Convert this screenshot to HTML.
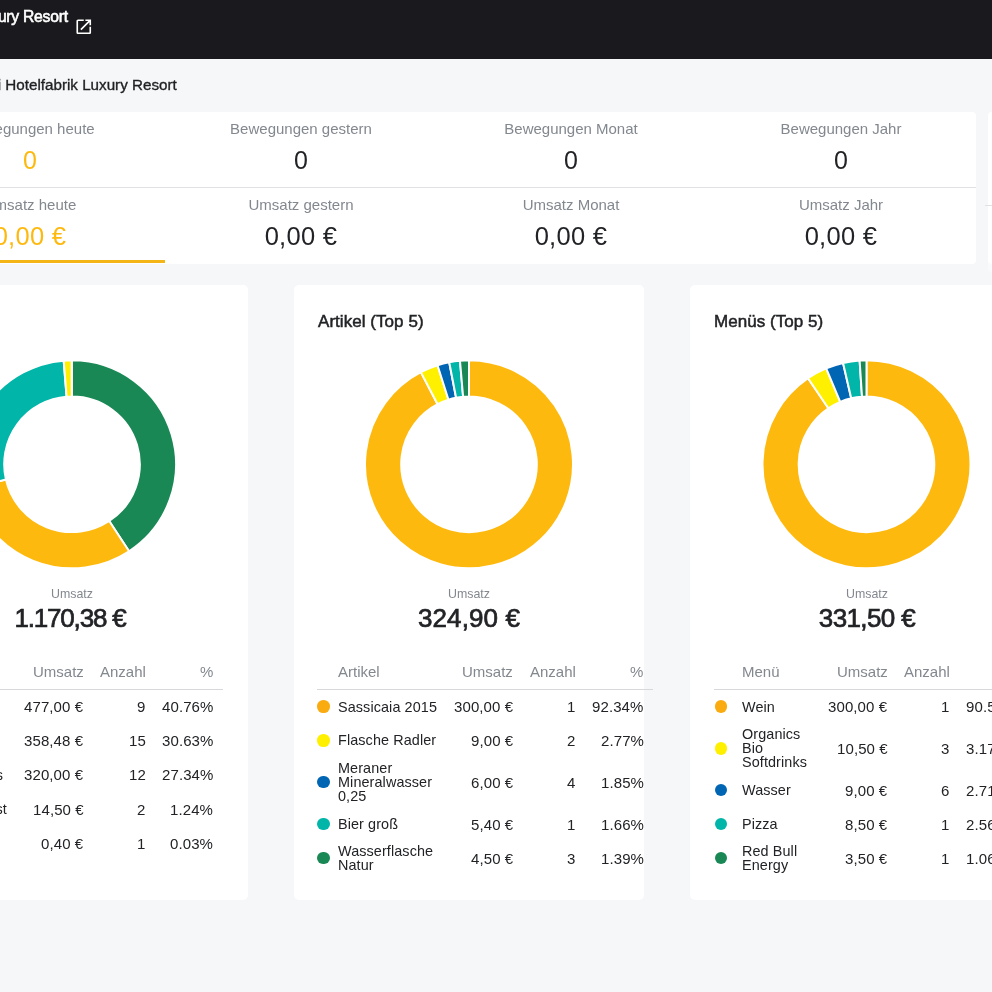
<!DOCTYPE html><html><head><meta charset="utf-8"><style>
html,body{margin:0;padding:0;width:992px;height:992px;overflow:hidden;background:#f6f7f9;font-family:"Liberation Sans",sans-serif}
.t{position:absolute;line-height:1;white-space:nowrap;will-change:transform}
</style></head><body>
<div style="position:absolute;left:0px;top:0px;width:992px;height:59.4px;background:#1a191e"></div>
<div class="t" style="right:924.5px;top:8.76px;font-size:15.7px;color:#ffffff;font-weight:400;letter-spacing:-0.25px;-webkit-text-stroke:0.6px #fff;">Hotelfabrik Luxury Resort</div>
<svg style="position:absolute;left:73.7px;top:17.4px" width="19.5" height="19.5" viewBox="0 0 24 24"><path fill="#fff" d="M19 19H5V5h7V3H5c-1.11 0-2 .9-2 2v14c0 1.1.89 2 2 2h14c1.1 0 2-.9 2-2v-7h-2v7zM14 3v2h3.59l-9.83 9.83 1.41 1.41L19 6.41V10h2V3h-7z"/></svg>
<div class="t" style="right:815.4px;top:77.28px;font-size:15.2px;color:#1f2023;font-weight:400;letter-spacing:0px;-webkit-text-stroke:0.35px #1f2023;">Kassi Hotelfabrik Luxury Resort</div>
<div style="position:absolute;left:-110px;top:111.7px;width:1086px;height:152.5px;background:#fff;border-radius:4px;overflow:hidden"></div>
<div style="position:absolute;left:-110px;top:187px;width:1086px;height:1px;background:#dfe1e4"></div>
<div style="position:absolute;left:-110px;top:260px;width:275.4px;height:3.2px;background:#f4b516"></div>
<div style="position:absolute;left:987.5px;top:111.7px;width:40px;height:160px;background:#f9fafb;border-radius:4px"></div>
<div style="position:absolute;left:987.5px;top:111.7px;width:40px;height:152.5px;background:#fff;border-radius:4px"></div>
<div style="position:absolute;left:985px;top:205px;width:40px;height:1px;background:#dfe1e4"></div>
<div class="t" style="left:-470px;width:1000px;text-align:center;top:120.75px;font-size:15px;color:#83888f;font-weight:400;letter-spacing:0px;">Bewegungen heute</div>
<div class="t" style="left:-470px;width:1000px;text-align:center;top:147.75px;font-size:25px;color:#feb90f;font-weight:400;letter-spacing:0px;">0</div>
<div class="t" style="left:-470px;width:1000px;text-align:center;top:196.85px;font-size:15px;color:#83888f;font-weight:400;letter-spacing:0px;">Umsatz heute</div>
<div class="t" style="left:-470px;width:1000px;text-align:center;top:223.72px;font-size:25.5px;color:#feb90f;font-weight:400;letter-spacing:0.3px;">0,00 €</div>
<div class="t" style="left:-199.2px;width:1000px;text-align:center;top:120.75px;font-size:15px;color:#83888f;font-weight:400;letter-spacing:0px;">Bewegungen gestern</div>
<div class="t" style="left:-199.2px;width:1000px;text-align:center;top:147.75px;font-size:25px;color:#222326;font-weight:400;letter-spacing:0px;">0</div>
<div class="t" style="left:-199.2px;width:1000px;text-align:center;top:196.85px;font-size:15px;color:#83888f;font-weight:400;letter-spacing:0px;">Umsatz gestern</div>
<div class="t" style="left:-199.2px;width:1000px;text-align:center;top:223.72px;font-size:25.5px;color:#222326;font-weight:400;letter-spacing:0.3px;">0,00 €</div>
<div class="t" style="left:71px;width:1000px;text-align:center;top:120.75px;font-size:15px;color:#83888f;font-weight:400;letter-spacing:0px;">Bewegungen Monat</div>
<div class="t" style="left:71px;width:1000px;text-align:center;top:147.75px;font-size:25px;color:#222326;font-weight:400;letter-spacing:0px;">0</div>
<div class="t" style="left:71px;width:1000px;text-align:center;top:196.85px;font-size:15px;color:#83888f;font-weight:400;letter-spacing:0px;">Umsatz Monat</div>
<div class="t" style="left:71px;width:1000px;text-align:center;top:223.72px;font-size:25.5px;color:#222326;font-weight:400;letter-spacing:0.3px;">0,00 €</div>
<div class="t" style="left:341px;width:1000px;text-align:center;top:120.75px;font-size:15px;color:#83888f;font-weight:400;letter-spacing:0px;">Bewegungen Jahr</div>
<div class="t" style="left:341px;width:1000px;text-align:center;top:147.75px;font-size:25px;color:#222326;font-weight:400;letter-spacing:0px;">0</div>
<div class="t" style="left:341px;width:1000px;text-align:center;top:196.85px;font-size:15px;color:#83888f;font-weight:400;letter-spacing:0px;">Umsatz Jahr</div>
<div class="t" style="left:341px;width:1000px;text-align:center;top:223.72px;font-size:25.5px;color:#222326;font-weight:400;letter-spacing:0.3px;">0,00 €</div>
<div style="position:absolute;left:-102px;top:284.6px;width:350px;height:615.4px;background:#fff;border-radius:5px"></div>
<div style="position:absolute;left:294px;top:284.6px;width:350px;height:615.4px;background:#fff;border-radius:5px"></div>
<div style="position:absolute;left:690px;top:284.6px;width:350px;height:615.4px;background:#fff;border-radius:5px"></div>
<svg style="position:absolute;left:0;top:0" width="992" height="992"><path d="M72.00 360.30A104 104 0 0 1 129.07 551.25L109.20 520.98A67.8 67.8 0 0 0 72.00 396.50Z" fill="#1a8855" stroke="#fff" stroke-width="2" stroke-linejoin="round"/><path d="M129.07 551.25A104 104 0 0 1 -29.33 487.72L5.94 479.57A67.8 67.8 0 0 0 109.20 520.98Z" fill="#feb90f" stroke="#fff" stroke-width="2" stroke-linejoin="round"/><path d="M-29.33 487.72A104 104 0 0 1 63.69 360.63L66.58 396.72A67.8 67.8 0 0 0 5.94 479.57Z" fill="#02b5a9" stroke="#fff" stroke-width="2" stroke-linejoin="round"/><path d="M63.69 360.63A104 104 0 0 1 71.78 360.30L71.85 396.50A67.8 67.8 0 0 0 66.58 396.72Z" fill="#fff000" stroke="#fff" stroke-width="2" stroke-linejoin="round"/><path d="M71.78 360.30A104 104 0 0 1 72.00 360.30L72.00 396.50A67.8 67.8 0 0 0 71.85 396.50Z" fill="#0065b3" stroke="#fff" stroke-width="2" stroke-linejoin="round"/></svg>
<svg style="position:absolute;left:0;top:0" width="992" height="992"><path d="M469.00 360.30A104 104 0 1 1 420.83 372.13L437.60 404.21A67.8 67.8 0 1 0 469.00 396.50Z" fill="#feb90f" stroke="#fff" stroke-width="2" stroke-linejoin="round"/><path d="M420.83 372.13A104 104 0 0 1 437.52 365.18L448.48 399.68A67.8 67.8 0 0 0 437.60 404.21Z" fill="#fff000" stroke="#fff" stroke-width="2" stroke-linejoin="round"/><path d="M437.52 365.18A104 104 0 0 1 449.21 362.20L456.10 397.74A67.8 67.8 0 0 0 448.48 399.68Z" fill="#0065b3" stroke="#fff" stroke-width="2" stroke-linejoin="round"/><path d="M449.21 362.20A104 104 0 0 1 459.96 360.69L463.11 396.76A67.8 67.8 0 0 0 456.10 397.74Z" fill="#02b5a9" stroke="#fff" stroke-width="2" stroke-linejoin="round"/><path d="M459.96 360.69A104 104 0 0 1 469.00 360.30L469.00 396.50A67.8 67.8 0 0 0 463.11 396.76Z" fill="#1a8855" stroke="#fff" stroke-width="2" stroke-linejoin="round"/></svg>
<svg style="position:absolute;left:0;top:0" width="992" height="992"><path d="M866.50 360.30A104 104 0 1 1 808.03 378.29L828.38 408.23A67.8 67.8 0 1 0 866.50 396.50Z" fill="#feb90f" stroke="#fff" stroke-width="2" stroke-linejoin="round"/><path d="M808.03 378.29A104 104 0 0 1 826.19 368.43L840.22 401.80A67.8 67.8 0 0 0 828.38 408.23Z" fill="#fff000" stroke="#fff" stroke-width="2" stroke-linejoin="round"/><path d="M826.19 368.43A104 104 0 0 1 843.05 362.98L851.21 398.25A67.8 67.8 0 0 0 840.22 401.80Z" fill="#0065b3" stroke="#fff" stroke-width="2" stroke-linejoin="round"/><path d="M843.05 362.98A104 104 0 0 1 859.61 360.53L862.01 396.65A67.8 67.8 0 0 0 851.21 398.25Z" fill="#02b5a9" stroke="#fff" stroke-width="2" stroke-linejoin="round"/><path d="M859.61 360.53A104 104 0 0 1 866.50 360.30L866.50 396.50A67.8 67.8 0 0 0 862.01 396.65Z" fill="#1a8855" stroke="#fff" stroke-width="2" stroke-linejoin="round"/></svg>
<div class="t" style="left:-428px;width:1000px;text-align:center;top:587.86px;font-size:12.4px;color:#83888f;font-weight:400;letter-spacing:0px;">Umsatz</div>
<div class="t" style="left:-430.2px;width:1000px;text-align:center;top:605.10px;font-size:26px;color:#222326;font-weight:400;letter-spacing:-1.2px;-webkit-text-stroke:0.7px #222326;">1.170,38 €</div>
<div class="t" style="left:317.8px;top:313.35px;font-size:17px;color:#222326;font-weight:400;letter-spacing:0.05px;-webkit-text-stroke:0.5px #222326;">Artikel (Top 5)</div>
<div class="t" style="left:-31px;width:1000px;text-align:center;top:587.86px;font-size:12.4px;color:#83888f;font-weight:400;letter-spacing:0px;">Umsatz</div>
<div class="t" style="left:-30.69999999999999px;width:1000px;text-align:center;top:605.10px;font-size:26px;color:#222326;font-weight:400;letter-spacing:0.1px;-webkit-text-stroke:0.7px #222326;">324,90 €</div>
<div class="t" style="left:713.8px;top:313.35px;font-size:17px;color:#222326;font-weight:400;letter-spacing:0.05px;-webkit-text-stroke:0.5px #222326;">Menüs (Top 5)</div>
<div class="t" style="left:366.5px;width:1000px;text-align:center;top:587.86px;font-size:12.4px;color:#83888f;font-weight:400;letter-spacing:0px;">Umsatz</div>
<div class="t" style="left:366.6px;width:1000px;text-align:center;top:605.10px;font-size:26px;color:#222326;font-weight:400;letter-spacing:-0.6px;-webkit-text-stroke:0.7px #222326;">331,50 €</div>
<div class="t" style="right:908.5px;top:664.05px;font-size:15px;color:#83888f;font-weight:400;letter-spacing:0px;">Umsatz</div>
<div class="t" style="right:846.2px;top:664.05px;font-size:15px;color:#83888f;font-weight:400;letter-spacing:0px;">Anzahl</div>
<div class="t" style="right:778.5px;top:664.05px;font-size:15px;color:#83888f;font-weight:400;letter-spacing:0px;">%</div>
<div style="position:absolute;left:-79px;top:689.2px;width:302px;height:1px;background:#d6d8dc"></div>
<div class="t" style="right:1022px;top:699.66px;font-size:14.4px;color:#222326;font-weight:400;letter-spacing:0.1px;">Getränke</div>
<div class="t" style="right:908.5px;top:699.25px;font-size:15px;color:#222326;font-weight:400;letter-spacing:0.1px;">477,00 €</div>
<div class="t" style="right:846.2px;top:699.25px;font-size:15px;color:#222326;font-weight:400;letter-spacing:0.1px;">9</div>
<div class="t" style="right:778.5px;top:699.25px;font-size:15px;color:#222326;font-weight:400;letter-spacing:0.1px;">40.76%</div>
<div class="t" style="right:1022px;top:733.66px;font-size:14.4px;color:#222326;font-weight:400;letter-spacing:0.1px;">Speisen</div>
<div class="t" style="right:908.5px;top:733.25px;font-size:15px;color:#222326;font-weight:400;letter-spacing:0.1px;">358,48 €</div>
<div class="t" style="right:846.2px;top:733.25px;font-size:15px;color:#222326;font-weight:400;letter-spacing:0.1px;">15</div>
<div class="t" style="right:778.5px;top:733.25px;font-size:15px;color:#222326;font-weight:400;letter-spacing:0.1px;">30.63%</div>
<div class="t" style="right:989px;top:767.86px;font-size:14.4px;color:#222326;font-weight:400;letter-spacing:0.1px;">Softdrinks</div>
<div class="t" style="right:908.5px;top:767.45px;font-size:15px;color:#222326;font-weight:400;letter-spacing:0.1px;">320,00 €</div>
<div class="t" style="right:846.2px;top:767.45px;font-size:15px;color:#222326;font-weight:400;letter-spacing:0.1px;">12</div>
<div class="t" style="right:778.5px;top:767.45px;font-size:15px;color:#222326;font-weight:400;letter-spacing:0.1px;">27.34%</div>
<div class="t" style="right:985.4px;top:802.06px;font-size:14.4px;color:#222326;font-weight:400;letter-spacing:0.1px;">Frühstück Gast</div>
<div class="t" style="right:908.5px;top:801.65px;font-size:15px;color:#222326;font-weight:400;letter-spacing:0.1px;">14,50 €</div>
<div class="t" style="right:846.2px;top:801.65px;font-size:15px;color:#222326;font-weight:400;letter-spacing:0.1px;">2</div>
<div class="t" style="right:778.5px;top:801.65px;font-size:15px;color:#222326;font-weight:400;letter-spacing:0.1px;">1.24%</div>
<div class="t" style="right:1022px;top:836.26px;font-size:14.4px;color:#222326;font-weight:400;letter-spacing:0.1px;">Sonstiges</div>
<div class="t" style="right:908.5px;top:835.85px;font-size:15px;color:#222326;font-weight:400;letter-spacing:0.1px;">0,40 €</div>
<div class="t" style="right:846.2px;top:835.85px;font-size:15px;color:#222326;font-weight:400;letter-spacing:0.1px;">1</div>
<div class="t" style="right:778.5px;top:835.85px;font-size:15px;color:#222326;font-weight:400;letter-spacing:0.1px;">0.03%</div>
<div class="t" style="left:338.2px;top:664.05px;font-size:15px;color:#83888f;font-weight:400;letter-spacing:0px;">Artikel</div>
<div class="t" style="right:478.79999999999995px;top:664.05px;font-size:15px;color:#83888f;font-weight:400;letter-spacing:0px;">Umsatz</div>
<div class="t" style="right:416.4px;top:664.05px;font-size:15px;color:#83888f;font-weight:400;letter-spacing:0px;">Anzahl</div>
<div class="t" style="right:348.4px;top:664.05px;font-size:15px;color:#83888f;font-weight:400;letter-spacing:0px;">%</div>
<div style="position:absolute;left:317px;top:689.2px;width:336px;height:1px;background:#d6d8dc"></div>
<div style="position:absolute;left:317.3px;top:700.1500000000001px;width:12.6px;height:12.6px;background:#f9ab0f;border-radius:50%"></div>
<div class="t" style="left:338.2px;top:699.51px;font-size:14.4px;color:#222326;font-weight:400;letter-spacing:0.1px;">Sassicaia 2015</div>
<div class="t" style="right:478.79999999999995px;top:699.10px;font-size:15px;color:#222326;font-weight:400;letter-spacing:0.1px;">300,00 €</div>
<div class="t" style="right:416.4px;top:699.10px;font-size:15px;color:#222326;font-weight:400;letter-spacing:0.1px;">1</div>
<div class="t" style="right:348.4px;top:699.10px;font-size:15px;color:#222326;font-weight:400;letter-spacing:0.1px;">92.34%</div>
<div style="position:absolute;left:317.3px;top:734.0500000000001px;width:12.6px;height:12.6px;background:#fff000;border-radius:50%"></div>
<div class="t" style="left:338.2px;top:733.41px;font-size:14.4px;color:#222326;font-weight:400;letter-spacing:0.1px;">Flasche Radler</div>
<div class="t" style="right:478.79999999999995px;top:733.00px;font-size:15px;color:#222326;font-weight:400;letter-spacing:0.1px;">9,00 €</div>
<div class="t" style="right:416.4px;top:733.00px;font-size:15px;color:#222326;font-weight:400;letter-spacing:0.1px;">2</div>
<div class="t" style="right:348.4px;top:733.00px;font-size:15px;color:#222326;font-weight:400;letter-spacing:0.1px;">2.77%</div>
<div style="position:absolute;left:317.3px;top:775.9000000000001px;width:12.6px;height:12.6px;background:#0065b3;border-radius:50%"></div>
<div class="t" style="left:338.2px;top:761.26px;font-size:14.4px;color:#222326;font-weight:400;letter-spacing:0.1px;">Meraner</div>
<div class="t" style="left:338.2px;top:775.26px;font-size:14.4px;color:#222326;font-weight:400;letter-spacing:0.1px;">Mineralwasser</div>
<div class="t" style="left:338.2px;top:789.26px;font-size:14.4px;color:#222326;font-weight:400;letter-spacing:0.1px;">0,25</div>
<div class="t" style="right:478.79999999999995px;top:774.85px;font-size:15px;color:#222326;font-weight:400;letter-spacing:0.1px;">6,00 €</div>
<div class="t" style="right:416.4px;top:774.85px;font-size:15px;color:#222326;font-weight:400;letter-spacing:0.1px;">4</div>
<div class="t" style="right:348.4px;top:774.85px;font-size:15px;color:#222326;font-weight:400;letter-spacing:0.1px;">1.85%</div>
<div style="position:absolute;left:317.3px;top:817.6500000000001px;width:12.6px;height:12.6px;background:#02b5a9;border-radius:50%"></div>
<div class="t" style="left:338.2px;top:817.01px;font-size:14.4px;color:#222326;font-weight:400;letter-spacing:0.1px;">Bier groß</div>
<div class="t" style="right:478.79999999999995px;top:816.60px;font-size:15px;color:#222326;font-weight:400;letter-spacing:0.1px;">5,40 €</div>
<div class="t" style="right:416.4px;top:816.60px;font-size:15px;color:#222326;font-weight:400;letter-spacing:0.1px;">1</div>
<div class="t" style="right:348.4px;top:816.60px;font-size:15px;color:#222326;font-weight:400;letter-spacing:0.1px;">1.66%</div>
<div style="position:absolute;left:317.3px;top:851.5500000000001px;width:12.6px;height:12.6px;background:#1a8855;border-radius:50%"></div>
<div class="t" style="left:338.2px;top:843.91px;font-size:14.4px;color:#222326;font-weight:400;letter-spacing:0.1px;">Wasserflasche</div>
<div class="t" style="left:338.2px;top:857.91px;font-size:14.4px;color:#222326;font-weight:400;letter-spacing:0.1px;">Natur</div>
<div class="t" style="right:478.79999999999995px;top:850.50px;font-size:15px;color:#222326;font-weight:400;letter-spacing:0.1px;">4,50 €</div>
<div class="t" style="right:416.4px;top:850.50px;font-size:15px;color:#222326;font-weight:400;letter-spacing:0.1px;">3</div>
<div class="t" style="right:348.4px;top:850.50px;font-size:15px;color:#222326;font-weight:400;letter-spacing:0.1px;">1.39%</div>
<div class="t" style="left:742.0px;top:664.05px;font-size:15px;color:#83888f;font-weight:400;letter-spacing:0px;">Menü</div>
<div class="t" style="right:104.5px;top:664.05px;font-size:15px;color:#83888f;font-weight:400;letter-spacing:0px;">Umsatz</div>
<div class="t" style="right:42.200000000000045px;top:664.05px;font-size:15px;color:#83888f;font-weight:400;letter-spacing:0px;">Anzahl</div>
<div class="t" style="right:-17.5px;top:664.05px;font-size:15px;color:#83888f;font-weight:400;letter-spacing:0px;">%</div>
<div style="position:absolute;left:714px;top:689.2px;width:336px;height:1px;background:#d6d8dc"></div>
<div style="position:absolute;left:714.9px;top:700.1500000000001px;width:12.6px;height:12.6px;background:#f9ab0f;border-radius:50%"></div>
<div class="t" style="left:742.0px;top:699.51px;font-size:14.4px;color:#222326;font-weight:400;letter-spacing:0.1px;">Wein</div>
<div class="t" style="right:104.5px;top:699.10px;font-size:15px;color:#222326;font-weight:400;letter-spacing:0.1px;">300,00 €</div>
<div class="t" style="right:42.200000000000045px;top:699.10px;font-size:15px;color:#222326;font-weight:400;letter-spacing:0.1px;">1</div>
<div class="t" style="right:-17.5px;top:699.10px;font-size:15px;color:#222326;font-weight:400;letter-spacing:0.1px;">90.5%</div>
<div style="position:absolute;left:714.9px;top:741.95px;width:12.6px;height:12.6px;background:#fff000;border-radius:50%"></div>
<div class="t" style="left:742.0px;top:727.31px;font-size:14.4px;color:#222326;font-weight:400;letter-spacing:0.1px;">Organics</div>
<div class="t" style="left:742.0px;top:741.31px;font-size:14.4px;color:#222326;font-weight:400;letter-spacing:0.1px;">Bio</div>
<div class="t" style="left:742.0px;top:755.31px;font-size:14.4px;color:#222326;font-weight:400;letter-spacing:0.1px;">Softdrinks</div>
<div class="t" style="right:104.5px;top:740.90px;font-size:15px;color:#222326;font-weight:400;letter-spacing:0.1px;">10,50 €</div>
<div class="t" style="right:42.200000000000045px;top:740.90px;font-size:15px;color:#222326;font-weight:400;letter-spacing:0.1px;">3</div>
<div class="t" style="right:-17.5px;top:740.90px;font-size:15px;color:#222326;font-weight:400;letter-spacing:0.1px;">3.17%</div>
<div style="position:absolute;left:714.9px;top:783.75px;width:12.6px;height:12.6px;background:#0065b3;border-radius:50%"></div>
<div class="t" style="left:742.0px;top:783.11px;font-size:14.4px;color:#222326;font-weight:400;letter-spacing:0.1px;">Wasser</div>
<div class="t" style="right:104.5px;top:782.70px;font-size:15px;color:#222326;font-weight:400;letter-spacing:0.1px;">9,00 €</div>
<div class="t" style="right:42.200000000000045px;top:782.70px;font-size:15px;color:#222326;font-weight:400;letter-spacing:0.1px;">6</div>
<div class="t" style="right:-17.5px;top:782.70px;font-size:15px;color:#222326;font-weight:400;letter-spacing:0.1px;">2.71%</div>
<div style="position:absolute;left:714.9px;top:817.6500000000001px;width:12.6px;height:12.6px;background:#02b5a9;border-radius:50%"></div>
<div class="t" style="left:742.0px;top:817.01px;font-size:14.4px;color:#222326;font-weight:400;letter-spacing:0.1px;">Pizza</div>
<div class="t" style="right:104.5px;top:816.60px;font-size:15px;color:#222326;font-weight:400;letter-spacing:0.1px;">8,50 €</div>
<div class="t" style="right:42.200000000000045px;top:816.60px;font-size:15px;color:#222326;font-weight:400;letter-spacing:0.1px;">1</div>
<div class="t" style="right:-17.5px;top:816.60px;font-size:15px;color:#222326;font-weight:400;letter-spacing:0.1px;">2.56%</div>
<div style="position:absolute;left:714.9px;top:851.5500000000001px;width:12.6px;height:12.6px;background:#1a8855;border-radius:50%"></div>
<div class="t" style="left:742.0px;top:843.91px;font-size:14.4px;color:#222326;font-weight:400;letter-spacing:0.1px;">Red Bull</div>
<div class="t" style="left:742.0px;top:857.91px;font-size:14.4px;color:#222326;font-weight:400;letter-spacing:0.1px;">Energy</div>
<div class="t" style="right:104.5px;top:850.50px;font-size:15px;color:#222326;font-weight:400;letter-spacing:0.1px;">3,50 €</div>
<div class="t" style="right:42.200000000000045px;top:850.50px;font-size:15px;color:#222326;font-weight:400;letter-spacing:0.1px;">1</div>
<div class="t" style="right:-17.5px;top:850.50px;font-size:15px;color:#222326;font-weight:400;letter-spacing:0.1px;">1.06%</div>
</body></html>
